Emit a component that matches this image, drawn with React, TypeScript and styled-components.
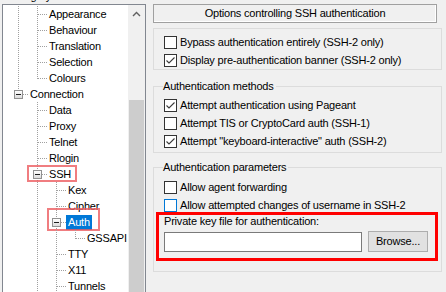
import React from "react";
import styled, { createGlobalStyle } from "styled-components";

const GlobalStyle = createGlobalStyle`
  html, body {
    margin: 0;
    padding: 0;
    background: #f0f0f0;
  }
  body {
    font-family: "Liberation Sans", Arial, sans-serif;
    font-size: 11px;
    letter-spacing: -0.2px;
    color: #000;
  }
`;

type Flag = { left: number; top: number; width: number; height: number };

type TreeNode = {
  label: string;
  guides: boolean[];
  last?: boolean;
  open?: boolean;
  selected?: boolean;
  flag?: Flag;
};

const nodes: TreeNode[] = [
  { label: "Appearance", guides: [true] },
  { label: "Behaviour", guides: [true] },
  { label: "Translation", guides: [true] },
  { label: "Selection", guides: [true] },
  { label: "Colours", guides: [true], last: true },
  { label: "Connection", guides: [], last: true, open: true },
  { label: "Data", guides: [false] },
  { label: "Proxy", guides: [false] },
  { label: "Telnet", guides: [false] },
  { label: "Rlogin", guides: [false] },
  {
    label: "SSH",
    guides: [false],
    open: true,
    flag: { left: 24, top: -1, width: 50, height: 17 },
  },
  { label: "Kex", guides: [false, true] },
  { label: "Cipher", guides: [false, true] },
  {
    label: "Auth",
    guides: [false, true],
    open: true,
    selected: true,
    flag: { left: 44, top: -6, width: 53, height: 23 },
  },
  { label: "GSSAPI", guides: [false, true, true], last: true },
  { label: "TTY", guides: [false, true] },
  { label: "X11", guides: [false, true] },
  { label: "Tunnels", guides: [false, true] },
];

const dotsDown = "repeating-linear-gradient(to bottom, #a0a0a0 0 1px, transparent 1px 2px)";
const dotsRight = "repeating-linear-gradient(to right, #a0a0a0 0 1px, transparent 1px 2px)";

const App = () => {
  return (
    <>
      <GlobalStyle />
      <Dialog>
        <LeftColumn>
          <Caption>Category:</Caption>
          <TreePanel>
            <TreeList>
              {nodes.map((n) => (
                <Row key={n.label}>
                  {n.guides.map((g, i) => (
                    <Guide key={i} $line={g} />
                  ))}
                  <Connector $last={n.last}>
                    {n.open && (
                      <Expander>
                        <Minus />
                      </Expander>
                    )}
                  </Connector>
                  <Label $selected={n.selected}>{n.label}</Label>
                  {n.flag && (
                    <Mark
                      style={{
                        left: n.flag.left,
                        top: n.flag.top,
                        width: n.flag.width,
                        height: n.flag.height,
                      }}
                    />
                  )}
                </Row>
              ))}
            </TreeList>
            <Scrollbar>
              <ArrowButton>
                <svg width="9" height="6" viewBox="0 0 9 6">
                  <polyline
                    points="1,5 4.5,1.5 8,5"
                    fill="none"
                    stroke="#606060"
                    strokeWidth="1.4"
                  />
                </svg>
              </ArrowButton>
              <Thumb />
            </Scrollbar>
          </TreePanel>
        </LeftColumn>

        <RightColumn>
          <Header>Options controlling SSH authentication</Header>

          <PlainGroup>
            <Check>
              <Box />
              Bypass authentication entirely (SSH-2 only)
            </Check>
            <Check>
              <Box>
                <Tick />
              </Box>
              Display pre-authentication banner (SSH-2 only)
            </Check>
          </PlainGroup>

          <Group $top={10} $padTop={3} $padBottom={2}>
            <Legend>Authentication methods</Legend>
            <Check>
              <Box>
                <Tick />
              </Box>
              Attempt authentication using Pageant
            </Check>
            <Check>
              <Box />
              Attempt TIS or CryptoCard auth (SSH-1)
            </Check>
            <Check>
              <Box>
                <Tick />
              </Box>
              Attempt "keyboard-interactive" auth (SSH-2)
            </Check>
          </Group>

          <Group $top={8} $padTop={4} $padBottom={10}>
            <Legend>Authentication parameters</Legend>
            <Check>
              <Box />
              Allow agent forwarding
            </Check>
            <Check>
              <Box $focus />
              Allow attempted changes of username in SSH-2
            </Check>
            <KeyBox>
              <FieldLabel>Private key file for authentication:</FieldLabel>
              <FileRow>
                <FileInput />
                <Button>Browse...</Button>
              </FileRow>
            </KeyBox>
          </Group>
        </RightColumn>
      </Dialog>
    </>
  );
};

const Tick = () => (
  <svg width="11" height="11" viewBox="0 0 11 11">
    <polyline
      points="1.5,5.5 4,8 9.5,2.5"
      fill="none"
      stroke="#3a3a3a"
      strokeWidth="1.1"
    />
  </svg>
);

export default App;

//styled-components

const Dialog = styled.div`
  width: 446px;
  height: 292px;
  overflow: hidden;
  display: flex;
  align-items: flex-start;
  background: #f0f0f0;
`;

const LeftColumn = styled.div`
  width: 144px;
  margin-left: 2px;
  display: flex;
  flex-direction: column;
  flex: none;
`;

const Caption = styled.div`
  height: 13px;
  line-height: 13px;
  margin-top: -10px;
  padding-left: 6px;
  overflow: hidden;
`;

const TreePanel = styled.div`
  height: 300px;
  margin-top: 1px;
  display: flex;
  background: #fff;
  border: 1px solid #828790;
`;

const TreeList = styled.div`
  flex: 1;
  padding-top: 1px;
  display: flex;
  flex-direction: column;
  overflow: hidden;
`;

const Row = styled.div`
  position: relative;
  display: flex;
  align-items: center;
  height: 16px;
  padding-left: 6px;
`;

const Guide = styled.span<{ $line: boolean }>`
  flex: none;
  width: 19px;
  height: 16px;
  background: ${(p) => (p.$line ? `${dotsDown} 9px 0 / 1px 16px no-repeat` : "none")};
`;

const Connector = styled.span<{ $last?: boolean }>`
  flex: none;
  width: 19px;
  height: 16px;
  display: flex;
  align-items: center;
  justify-content: center;
  background:
    ${dotsRight} 10px 8px / 9px 1px no-repeat,
    ${(p) => `${dotsDown} 9px 0 / 1px ${p.$last ? "9px" : "16px"} no-repeat`};
`;

const Expander = styled.span`
  box-sizing: border-box;
  width: 9px;
  height: 9px;
  margin-left: -1px;
  border: 1px solid #919191;
  background: linear-gradient(#ffffff, #dcdcdc);
  display: flex;
  align-items: center;
  justify-content: center;
`;

const Minus = styled.span`
  width: 5px;
  height: 1px;
  background: #1e1e1e;
`;

const Label = styled.span<{ $selected?: boolean }>`
  height: 15px;
  line-height: 15px;
  padding: 0 2px;
  white-space: nowrap;
  background: ${(p) => (p.$selected ? "#0078d7" : "transparent")};
  color: ${(p) => (p.$selected ? "#fff" : "#000")};
`;

const Mark = styled.span`
  position: absolute;
  box-sizing: border-box;
  border: 2px solid rgba(236, 92, 96, 0.8);
  pointer-events: none;
`;

const Scrollbar = styled.div`
  width: 17px;
  flex: none;
  background: #f0f0f0;
  display: flex;
  flex-direction: column;
`;

const ArrowButton = styled.div`
  height: 17px;
  display: flex;
  align-items: center;
  justify-content: center;
`;

const Thumb = styled.div`
  margin-top: 78px;
  margin-left: 1px;
  margin-right: 1px;
  flex: 1;
  background: #cdcdcd;
`;

const RightColumn = styled.div`
  width: 289px;
  margin-left: 7px;
  display: flex;
  flex-direction: column;
  flex: none;
`;

const Header = styled.div`
  width: 284px;
  box-sizing: border-box;
  height: 19px;
  margin-top: 4px;
  line-height: 17px;
  text-align: center;
  border: 1px solid #a0a0a0;
  box-shadow: inset -1px -1px 0 #ffffff;
`;

const PlainGroup = styled.div`
  margin-top: 5px;
  height: 42px;
  box-sizing: border-box;
  padding: 4px 0 0 10px;
  border: 1px solid #dcdcdc;
`;

const Group = styled.fieldset<{ $top: number; $padTop: number; $padBottom: number }>`
  margin: ${(p) => p.$top}px 0 0 0;
  min-width: 0;
  padding: ${(p) => `${p.$padTop}px 3px ${p.$padBottom}px 10px`};
  border: 1px solid #dcdcdc;
`;

const Legend = styled.legend`
  padding: 0 2px 0 0;
  margin-left: -1px;
  line-height: 13px;
`;

const Check = styled.div`
  display: flex;
  align-items: center;
  gap: 3px;
  height: 18px;
  white-space: nowrap;
`;

const Box = styled.span<{ $focus?: boolean }>`
  flex: none;
  box-sizing: border-box;
  width: 13px;
  height: 13px;
  border: 1px solid ${(p) => (p.$focus ? "#0078d7" : "#333333")};
  background: #fff;
  display: flex;
  align-items: center;
  justify-content: center;
`;

const KeyBox = styled.div`
  margin: -2px 0 0 -8px;
  padding: 0 7px 6px 5px;
  border: 3px solid #ff0000;
`;

const FieldLabel = styled.div`
  line-height: 13px;
`;

const FileRow = styled.div`
  display: flex;
  align-items: flex-start;
  gap: 6px;
  margin-top: 4px;
`;

const FileInput = styled.div`
  width: 198px;
  height: 20px;
  box-sizing: border-box;
  border: 1px solid #7a7a7a;
  background: #fff;
`;

const Button = styled.div`
  width: 60px;
  height: 21px;
  margin-top: -1px;
  box-sizing: border-box;
  border: 1px solid #adadad;
  background: #e1e1e1;
  line-height: 19px;
  text-align: center;
`;
